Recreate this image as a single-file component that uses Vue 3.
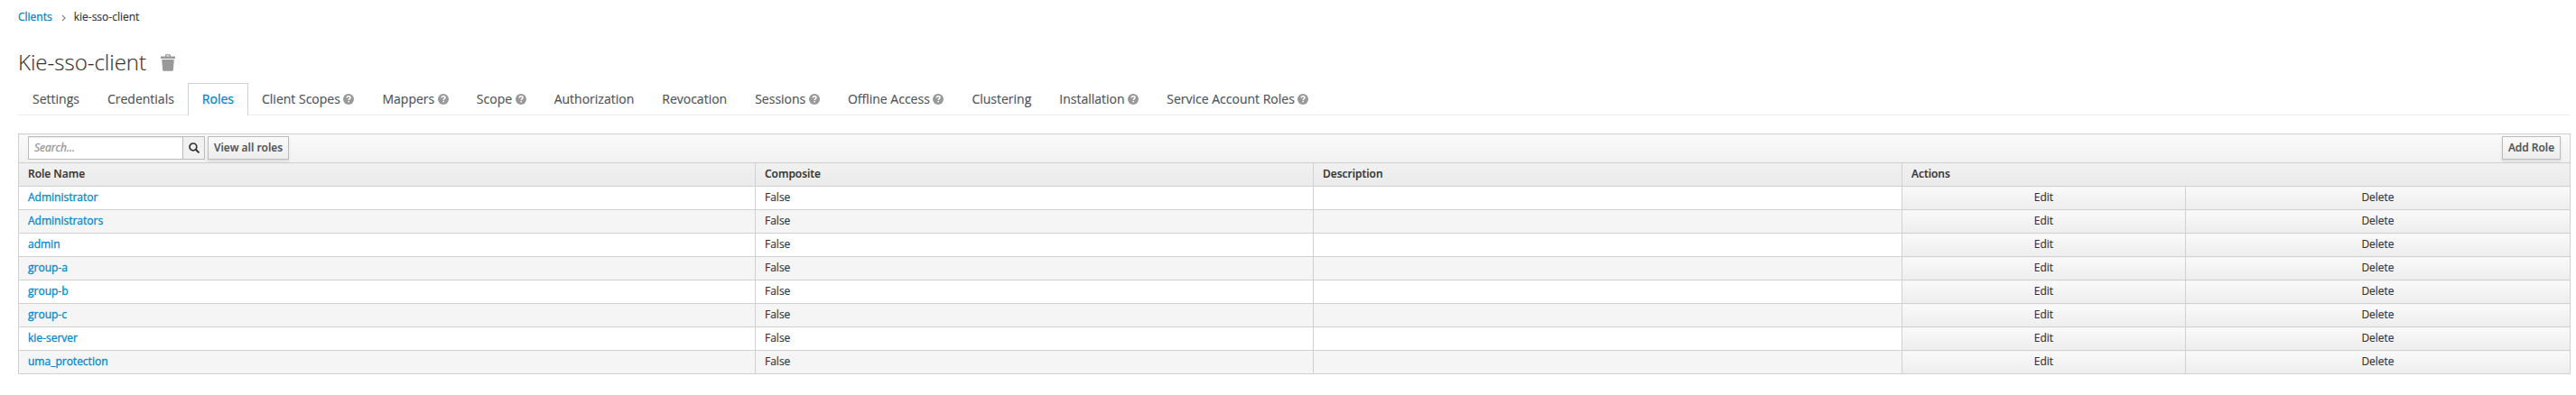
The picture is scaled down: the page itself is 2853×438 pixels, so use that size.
<script setup>
const tabs = [
  { label: 'Settings' },
  { label: 'Credentials' },
  { label: 'Roles', active: true },
  { label: 'Client Scopes', help: true },
  { label: 'Mappers', help: true },
  { label: 'Scope', help: true },
  { label: 'Authorization' },
  { label: 'Revocation' },
  { label: 'Sessions', help: true },
  { label: 'Offline Access', help: true },
  { label: 'Clustering' },
  { label: 'Installation', help: true },
  { label: 'Service Account Roles', help: true },
]
const roles = ['Administrator', 'Administrators', 'admin', 'group-a', 'group-b', 'group-c', 'kie-server', 'uma_protection']
</script>

<template>
  <main class="page">
    <nav class="breadcrumb">
      <a class="link">Clients</a>
      <svg class="chevron" viewBox="0 0 5 8"><path d="M1 1l3 3-3 3" fill="none" stroke="#8b8d8f" stroke-width="1.3" /></svg>
      <span>kie-sso-client</span>
    </nav>
    <h1 class="title">
      <span>Kie-sso-client</span>
      <svg class="trash" viewBox="0 0 16 19"><path d="M0 2.4h5V1.2Q5 .2 6 .2h4q1 0 1 1v1.2h5V5H0zM6.3 1.4v1h3.4v-1zM1.2 6h13.6l-1 11.8q-.1.9-1 .9H3.2q-.9 0-1-.9z" fill="#999" fill-rule="evenodd" /></svg>
    </h1>
    <ul class="tabs">
      <li v-for="t in tabs" :key="t.label" class="tab" :class="{ active: t.active }">
        <span>{{ t.label }}</span>
        <svg v-if="t.help" class="help" viewBox="0 0 12 12">
          <circle cx="6" cy="6" r="6" fill="#999" />
          <path d="M4.1 4.5C4.2 3.2 5 2.7 6.1 2.7s1.9.6 1.9 1.6c0 1.3-1.8 1.3-1.8 2.7" fill="none" stroke="#fff" stroke-width="1.5" />
          <rect x="5.4" y="7.9" width="1.6" height="1.5" fill="#fff" />
        </svg>
      </li>
    </ul>
    <table class="grid">
      <colgroup><col class="c1" /><col class="c2" /><col class="c3" /><col class="c4" /><col class="c5" /></colgroup>
      <thead>
        <tr class="toolrow">
          <th colspan="5">
            <div class="toolbar">
              <div class="search">
                <input class="field" type="text" placeholder="Search..." />
                <span class="addon">
                  <svg viewBox="0 0 12 12"><circle cx="4.9" cy="4.9" r="3.9" fill="none" stroke="#333" stroke-width="1.7" /><path d="M7.8 7.8l3.1 3.1" stroke="#333" stroke-width="2" stroke-linecap="round" /></svg>
                </span>
              </div>
              <button class="btn view">View all roles</button>
              <button class="btn add">Add Role</button>
            </div>
          </th>
        </tr>
        <tr class="heads">
          <th>Role Name</th><th>Composite</th><th>Description</th><th colspan="2">Actions</th>
        </tr>
      </thead>
      <tbody>
        <tr v-for="r in roles" :key="r">
          <td><a class="link">{{ r }}</a></td><td>False</td><td></td>
          <td class="action">Edit</td><td class="action">Delete</td>
        </tr>
      </tbody>
    </table>
  </main>
</template>

<style>
body { background: #fff; }
</style>

<style scoped>
.page { box-sizing: border-box; height: 438px; padding: 9px 6px 0 20px; overflow: hidden; font: 12px/20px "Open Sans", "Noto Sans", sans-serif; color: #333; -webkit-text-stroke: .15px currentColor; }
.link { color: #0088ce; -webkit-text-stroke-width: .3px; }
.breadcrumb { display: flex; align-items: center; height: 20px; }
.chevron { width: 5px; height: 8px; margin: 1px 9px 0 10px; }
.title { display: flex; align-items: center; height: 26px; margin: 27px 0 0; font-size: 24px; font-weight: 300; line-height: 26px; }
.trash { width: 16px; height: 19px; margin: 1px 0 0 16px; }
.tabs { display: flex; height: 35px; margin: 10px 0 20px; padding: 0; list-style: none; border-bottom: 1px solid #ededed; font-size: 14px; color: #4d5258; }
.tab { display: flex; align-items: center; box-sizing: border-box; height: 36px; padding: 0 15px 1px; border: 1px solid transparent; border-bottom: 0; white-space: nowrap; }
.tab + .tab { margin-left: -1px; }
.tab.active { background: #fff; border-color: #d1d1d1; color: #0088ce; -webkit-text-stroke-width: .3px; }
.help { width: 12px; height: 12px; margin-left: 3.6px; }
.grid { width: 2827px; table-layout: fixed; border-collapse: collapse; border: 1px solid #d1d1d1; }
.c1 { width: 816px; }
.c2 { width: 618px; }
.c3 { width: 652px; }
.c4 { width: 314px; }
.c5 { width: 426px; }
th, td { box-sizing: border-box; height: 26px; padding: 0 10px 2px; border: 1px solid #d1d1d1; text-align: left; line-height: 20px; }
th { font-weight: 600; }
.toolrow th { height: 32px; padding-bottom: 0; background: linear-gradient(#fafafa, #f1f1f1); }
.heads th { background: linear-gradient(#f1f1f1, #eaeaea); }
tbody tr:nth-child(even) { background: #f5f5f5; }
.action { text-align: center; background: linear-gradient(#fafafa, #ededed); }
.toolbar { display: flex; height: 26px; margin-top: -2px; }
.search { display: flex; box-sizing: border-box; width: 196px; border: 1px solid #bbb; }
.field { flex: 1; min-width: 0; padding: 0 6px; border: 0; outline: 0; background: #fff; font: inherit; font-weight: 400; box-shadow: inset 0 1px 1px rgba(3, 3, 3, .075); }
.field::placeholder { color: #999; font-style: italic; opacity: 1; -webkit-text-stroke: .35px #999; }
.addon { display: flex; align-items: center; justify-content: center; width: 23px; border-left: 1px solid #bbb; background: #f1f1f1; }
.addon svg { width: 12px; height: 12px; }
.btn { box-sizing: border-box; height: 26px; padding: 0; border: 1px solid #bbb; background: linear-gradient(#fafafa, #ededed); box-shadow: 0 2px 3px rgba(3, 3, 3, .1); font: 600 12px/20px "Open Sans", sans-serif; color: #4d5258; white-space: nowrap; }
.view { width: 90px; margin-left: 3px; }
.add { width: 65px; margin-left: auto; }
</style>
